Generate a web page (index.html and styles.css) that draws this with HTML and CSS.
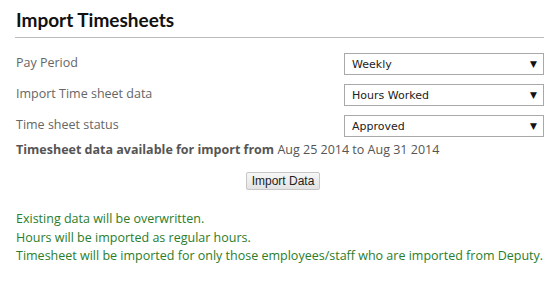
FILE: index.html
```html
<!DOCTYPE html>
<html>
<head>
<meta charset="utf-8">
<link rel="stylesheet" href="styles.css">
</head>
<body>
<div class="page">
  <h1 class="title">Import Timesheets</h1>
  <div class="form">
    <div class="row">
      <span class="label">Pay Period</span>
      <div class="select"><span>Weekly</span><span class="arrow">&#9660;</span></div>
    </div>
    <div class="row">
      <span class="label">Import Time sheet data</span>
      <div class="select"><span>Hours Worked</span><span class="arrow">&#9660;</span></div>
    </div>
    <div class="row">
      <span class="label">Time sheet status</span>
      <div class="select"><span>Approved</span><span class="arrow">&#9660;</span></div>
    </div>
  </div>
  <p class="avail"><b>Timesheet data available for import from</b> Aug 25 2014 to Aug 31 2014</p>
  <div class="actions"><button class="btn">Import Data</button></div>
  <div class="notes">
    <p>Existing data will be overwritten.</p>
    <p>Hours will be imported as regular hours.</p>
    <p>Timesheet will be imported for only those employees/staff who are imported from Deputy.</p>
  </div>
</div>
</body>
</html>
```
FILE: styles.css
```css
html, body { margin: 0; padding: 0; background: #fff; }
body { font-family: "Open Sans", "Noto Sans", sans-serif; color: #666; }
.page { padding: 8px 13px 0 15px; width: 529px; }
.title {
  margin: 0;
  padding: 0 0 5px 1px;
  font-family: "Lato", "Open Sans", sans-serif;
  font-size: 19px;
  font-weight: 700;
  color: #111;
  line-height: 24px;
  border-bottom: 1px solid #bbb;
}
.form { padding-top: 15px; display: flex; flex-direction: column; gap: 9px; }
.row { display: flex; justify-content: space-between; align-items: center; height: 22px; padding-left: 1px; }
.label { font-size: 12.5px; color: #666; position: relative; top: -2px; }
.select {
  box-sizing: border-box;
  width: 200px; height: 22px;
  border: 1px solid #a9a9a9;
  display: flex; justify-content: space-between; align-items: center;
  padding: 0 6px 0 7px;
  font-family: "DejaVu Sans", Verdana, sans-serif;
  font-size: 11px; color: #222;
}
.arrow { font-size: 9px; color: #111; }
.avail { margin: 4px 0 0 1px; font-size: 12.5px; color: #555; }
.avail b { color: #555; }
.actions { display: flex; justify-content: center; margin-top: 14px; padding-left: 7px; }
.btn {
  font-family: "Liberation Sans", Arial, sans-serif;
  font-size: 12px; color: #222;
  height: 18px; padding: 0 5px;
  border: 1px solid #c6c6c6; border-radius: 2px;
  background: linear-gradient(#f7f7f7, #e3e3e3);
}
.notes { margin-top: 20px; padding-left: 1px; color: #2a7d2a; font-size: 12.5px; }
.notes p { margin: 0; line-height: 18.5px; }
```
